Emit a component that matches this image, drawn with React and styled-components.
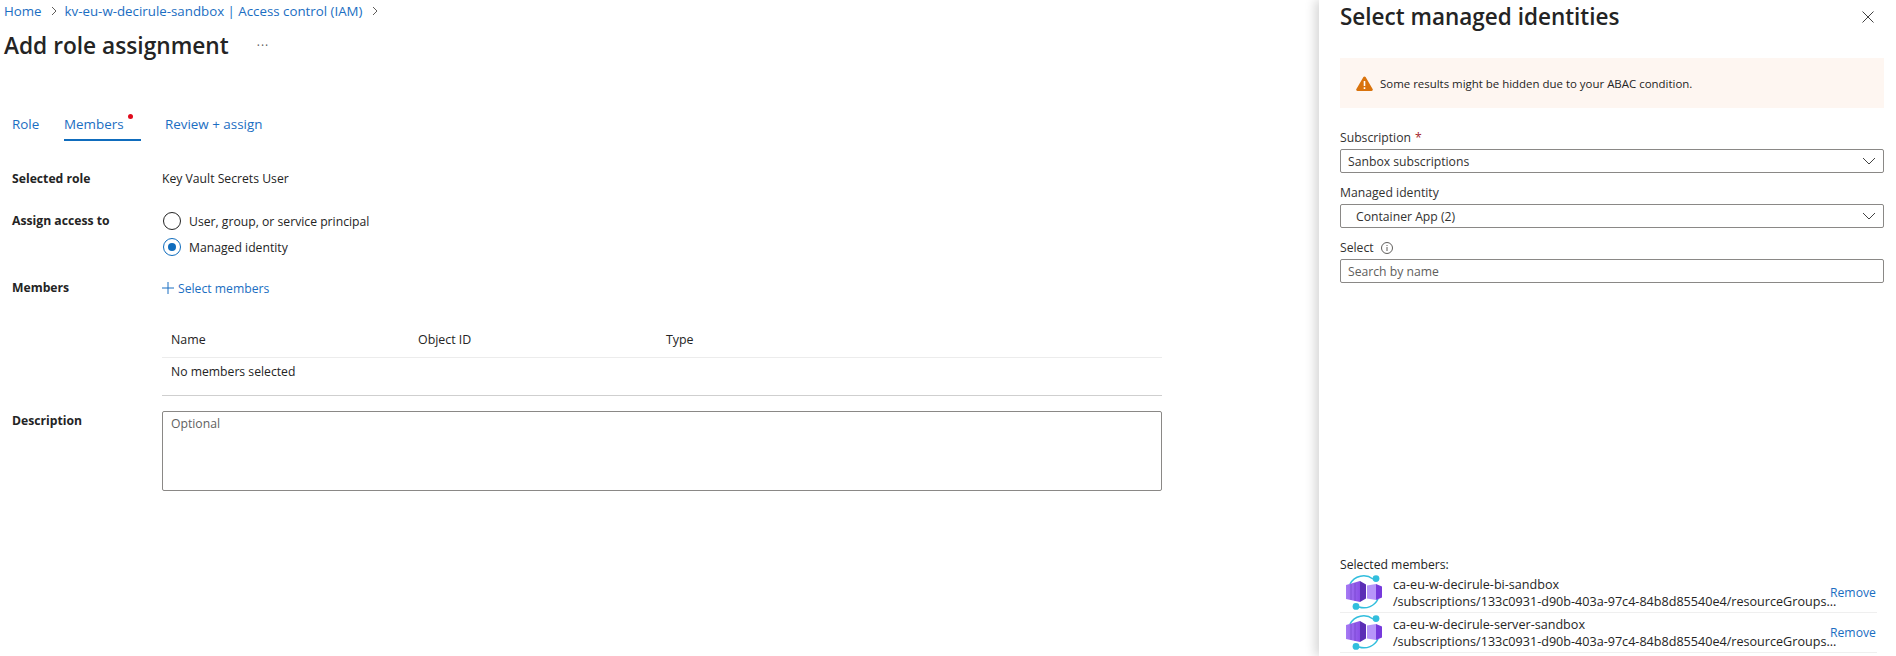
import React from "react";
import styled, { createGlobalStyle } from "styled-components";

const Global = createGlobalStyle`
  html, body { margin: 0; padding: 0; background: #fff; }
  body { font-family: "Open Sans", "Noto Sans", sans-serif; font-size: 12.2px; color: #242424; overflow: hidden; }
  * { box-sizing: border-box; }
`;

const Page = styled.div`display: flex; width: 1896px; height: 656px; overflow: hidden;`;
const Main = styled.main`flex: 1; min-width: 0; padding: 0 0 0 4px;`;
const Crumbs = styled.nav`display: flex; align-items: center; height: 22px; color: #1b6ec2; font-size: 13.3px;`;
const Crumb = styled.a`color: #1b6ec2;`;
const Sep = styled.svg`width: 10px; height: 10px; margin: 0 6px 0 7px; fill: none; stroke: #605e5c; stroke-width: 1;`;
const TitleRow = styled.div`display: flex; align-items: center; height: 47px;`;
const Title = styled.h1`margin: 0; font-size: 22.7px; font-weight: 600; color: #242424; line-height: 46px;`;
const More = styled.span`margin-left: 28px; color: #605e5c; font-size: 12px; letter-spacing: 1px;`;
const Tabs = styled.div`display: flex; height: 30px; margin: 42px 0 0 8px; color: #1b6ec2;`;
const Tab = styled.div`
  position: relative; display: flex; align-items: center; height: 30px; margin-right: ${p => p.$gap}px; width: ${p => p.$width}px;
  color: #1b6ec2; border-bottom: 2px solid ${p => (p.$active ? "#0f6cbd" : "transparent")}; font-size: 13.4px; padding-bottom: 2px;
`;
const Dot = styled.span`position: absolute; left: 64px; top: 3px; width: 5px; height: 5px; border-radius: 50%; background: #e00b1c;`;
const Form = styled.div`display: grid; grid-template-columns: 150px 1000px; margin-left: 8px; padding-top: 27px;`;
const Label = styled.div`font-weight: 700; line-height: 22px; color: #242424; margin-top: ${p => p.$nudge || 0}px;`;
const Cell = styled.div`margin-bottom: ${p => p.$mb || 0}px;`;
const Value = styled.div`line-height: 22px;`;
const Radios = styled.div`display: flex; flex-direction: column; gap: 4px;`;
const RadioRow = styled.div`display: flex; align-items: center; height: 22px; gap: 8px; padding-left: 1px;`;
const Radio = styled.span`
  width: 18px; height: 18px; border-radius: 50%; display: flex; align-items: center; justify-content: center;
  border: 1px solid ${p => (p.$on ? "#0f6cbd" : "#242424")};
  &::after { content: ""; width: 8px; height: 8px; border-radius: 50%; background: ${p => (p.$on ? "#0f6cbd" : "transparent")}; }
`;
const AddLink = styled.div`display: flex; align-items: center; gap: 4px; color: #1b6ec2; height: 22px;`;
const Plus = styled.svg`width: 12px; height: 12px; stroke: #1b6ec2; fill: none; stroke-width: 1;`;
const HeadRow = styled.div`display: grid; grid-template-columns: 247px 248px 1fr; padding: 0 0 2px 9px; height: 35px; align-items: center; border-bottom: 1px solid #ececec; font-size: 12.4px; font-weight: 500;`;
const EmptyRow = styled.div`padding-left: 9px; height: 38px; line-height: 28px; border-bottom: 1px solid #cfcfcf;`;
const TextArea = styled.div`height: 80px; border: 1px solid #8a8886; border-radius: 2px; padding: 4px 8px; color: #616161; line-height: 16px;`;

const Panel = styled.aside`width: 577px; flex: none; padding: 0 12px 0 21px; background: #fff; box-shadow: -4px 0 10px rgba(0,0,0,.16); position: relative;`;
const PanelHead = styled.div`display: flex; justify-content: space-between; align-items: center; height: 33px; margin-bottom: 25px;`;
const PanelTitle = styled.h2`margin: 0; font-size: 22.5px; font-weight: 600; color: #242424;`;
const Close = styled.svg`width: 12px; height: 12px; margin-right: 10px; stroke: #424242; stroke-width: 1; fill: none;`;
const Alert = styled.div`display: flex; align-items: center; gap: 7px; height: 50px; padding-left: 16px; background: #fef6f1; font-size: 11.45px;`;
const WarnIcon = styled.svg`width: 17px; height: 15px; flex: none;`;
const FieldLabel = styled.div`display: flex; align-items: center; height: 20px; padding-bottom: 1px; font-size: 12.2px; color: #323130; gap: 7px;`;
const Required = styled.span`color: #a4262c; margin-left: -3px;`;
const Field = styled.div`margin-top: ${p => p.$mt}px;`;
const Box = styled.div`
  display: flex; align-items: center; justify-content: space-between; height: 24px; margin-top: 1px;
  border: 1px solid #8a8886; border-radius: 2px; padding: 0 7px 0 ${p => p.$pad}px; color: ${p => p.$muted ? "#605e5c" : "#323130"};
`;
const Chevron = styled.svg`width: 14px; height: 10px; fill: none; stroke: #424242; stroke-width: 1;`;
const Info = styled.svg`width: 12px; height: 12px; fill: none; stroke: #605e5c; stroke-width: 1;`;
const Spacer = styled.div`height: 274px;`;
const SelLabel = styled.div`font-size: 12.2px; height: 16px; line-height: 16px;`;
const Member = styled.div`display: flex; align-items: center; height: 40px; width: 537px; padding-left: 6px; border-bottom: 1px solid #efefef;`;
const Logo = styled.svg`width: 36px; height: 36px; flex: none; margin-right: 11px;`;
const MemberText = styled.div`display: flex; flex-direction: column; width: 437px; line-height: 17px; font-size: 12.6px; white-space: nowrap;`;
const Remove = styled.a`color: #1b6ec2; font-size: 12.2px;`;

const Chev = () => <Sep viewBox="0 0 10 10"><path d="M3 1l4 4-4 4" /></Sep>;
const Down = () => <Chevron viewBox="0 0 14 10"><path d="M1 2l6 6 6-6" /></Chevron>;

const AppLogo = () => (
  <Logo viewBox="0 0 36 36">
    <defs>
      <linearGradient id="pa" x1="0" x2="1"><stop offset="0" stopColor="#a67af4" /><stop offset="1" stopColor="#8a4fe6" /></linearGradient>
    </defs>
    <path d="M4 9A15.5 15.5 0 0 1 27 4M32 24A15.5 15.5 0 0 1 13 32" fill="none" stroke="#32bedd" strokeWidth="1.5" />
    <path d="M0 10l14-4v21L0 24z" fill="url(#pa)" />
    <path d="M5 9v16M9 8v18" stroke="#6b3bc0" strokeWidth=".8" opacity=".7" />
    <path d="M14 6l6 3.500v14L14 27z" fill="#5b2db5" />
    <path d="M21 10.500l9-1.500v16l-9-1.500z" fill="#b796f9" />
    <path d="M30 9l6 2.500v11L30 25z" fill="#773adc" />
    <circle cx="30" cy="3.600" r="3.400" fill="#32bedd" />
    <circle cx="10" cy="31.400" r="3.400" fill="#32bedd" />
  </Logo>
);

const members = ["ca-eu-w-decirule-bi-sandbox", "ca-eu-w-decirule-server-sandbox"];
const path = "/subscriptions/133c0931-d90b-403a-97c4-84b8d85540e4/resourceGroups...";

export default function App() {
  return (
    <Page>
      <Global />
      <Main>
        <Crumbs>
          <Crumb>Home</Crumb><Chev />
          <Crumb>kv-eu-w-decirule-sandbox | Access control (IAM)</Crumb><Chev />
        </Crumbs>
        <TitleRow><Title>Add role assignment</Title><More>···</More></TitleRow>
        <Tabs>
          <Tab $gap={25} $width={27}>Role</Tab>
          <Tab $gap={24} $width={77} $active>Members<Dot /></Tab>
          <Tab $width={110}>Review + assign</Tab>
        </Tabs>
        <Form>
          <Label>Selected role</Label>
          <Cell $mb={20}><Value>Key Vault Secrets User</Value></Cell>
          <Label>Assign access to</Label>
          <Cell $mb={19}>
            <Radios>
              <RadioRow><Radio />User, group, or service principal</RadioRow>
              <RadioRow><Radio $on />Managed identity</RadioRow>
            </Radios>
          </Cell>
          <Label>Members</Label>
          <Cell $mb={24}>
            <AddLink>
              <Plus viewBox="0 0 12 12"><path d="M6 0v12M0 6h12" /></Plus>
              Select members
            </AddLink>
          </Cell>
          <span />
          <Cell $mb={15}>
            <HeadRow><span>Name</span><span>Object ID</span><span>Type</span></HeadRow>
            <EmptyRow>No members selected</EmptyRow>
          </Cell>
          <Label $nudge={-1}>Description</Label>
          <Cell><TextArea>Optional</TextArea></Cell>
        </Form>
      </Main>
      <Panel>
        <PanelHead>
          <PanelTitle>Select managed identities</PanelTitle>
          <Close viewBox="0 0 12 12"><path d="M.5.5l11 11M11.5.5l-11 11" /></Close>
        </PanelHead>
        <Alert>
          <WarnIcon viewBox="0 0 17 15">
            <path d="M7.4 1a1.3 1.3 0 0 1 2.2 0l7 12a1.3 1.3 0 0 1-1.1 2h-14a1.3 1.3 0 0 1-1.1-2z" fill="#d9730d" />
            <path d="M8.5 5v5M8.5 11.3v1.6" stroke="#fff" strokeWidth="1.6" />
          </WarnIcon>
          Some results might be hidden due to your ABAC condition.
        </Alert>
        <Field $mt={20}>
          <FieldLabel>Subscription <Required>*</Required></FieldLabel>
          <Box $pad={7}>Sanbox subscriptions<Down /></Box>
        </Field>
        <Field $mt={10}>
          <FieldLabel>Managed identity</FieldLabel>
          <Box $pad={15}>Container App (2)<Down /></Box>
        </Field>
        <Field $mt={10}>
          <FieldLabel>Select
            <Info viewBox="0 0 12 12"><circle cx="6" cy="6" r="5.5" /><path d="M6 5v4M6 3v1" /></Info>
          </FieldLabel>
          <Box $pad={7} $muted>Search by name</Box>
        </Field>
        <Spacer />
        <SelLabel>Selected members:</SelLabel>
        {members.map(m => (
          <Member key={m}>
            <AppLogo />
            <MemberText><span>{m}</span><span>{path}</span></MemberText>
            <Remove>Remove</Remove>
          </Member>
        ))}
      </Panel>
    </Page>
  );
}
